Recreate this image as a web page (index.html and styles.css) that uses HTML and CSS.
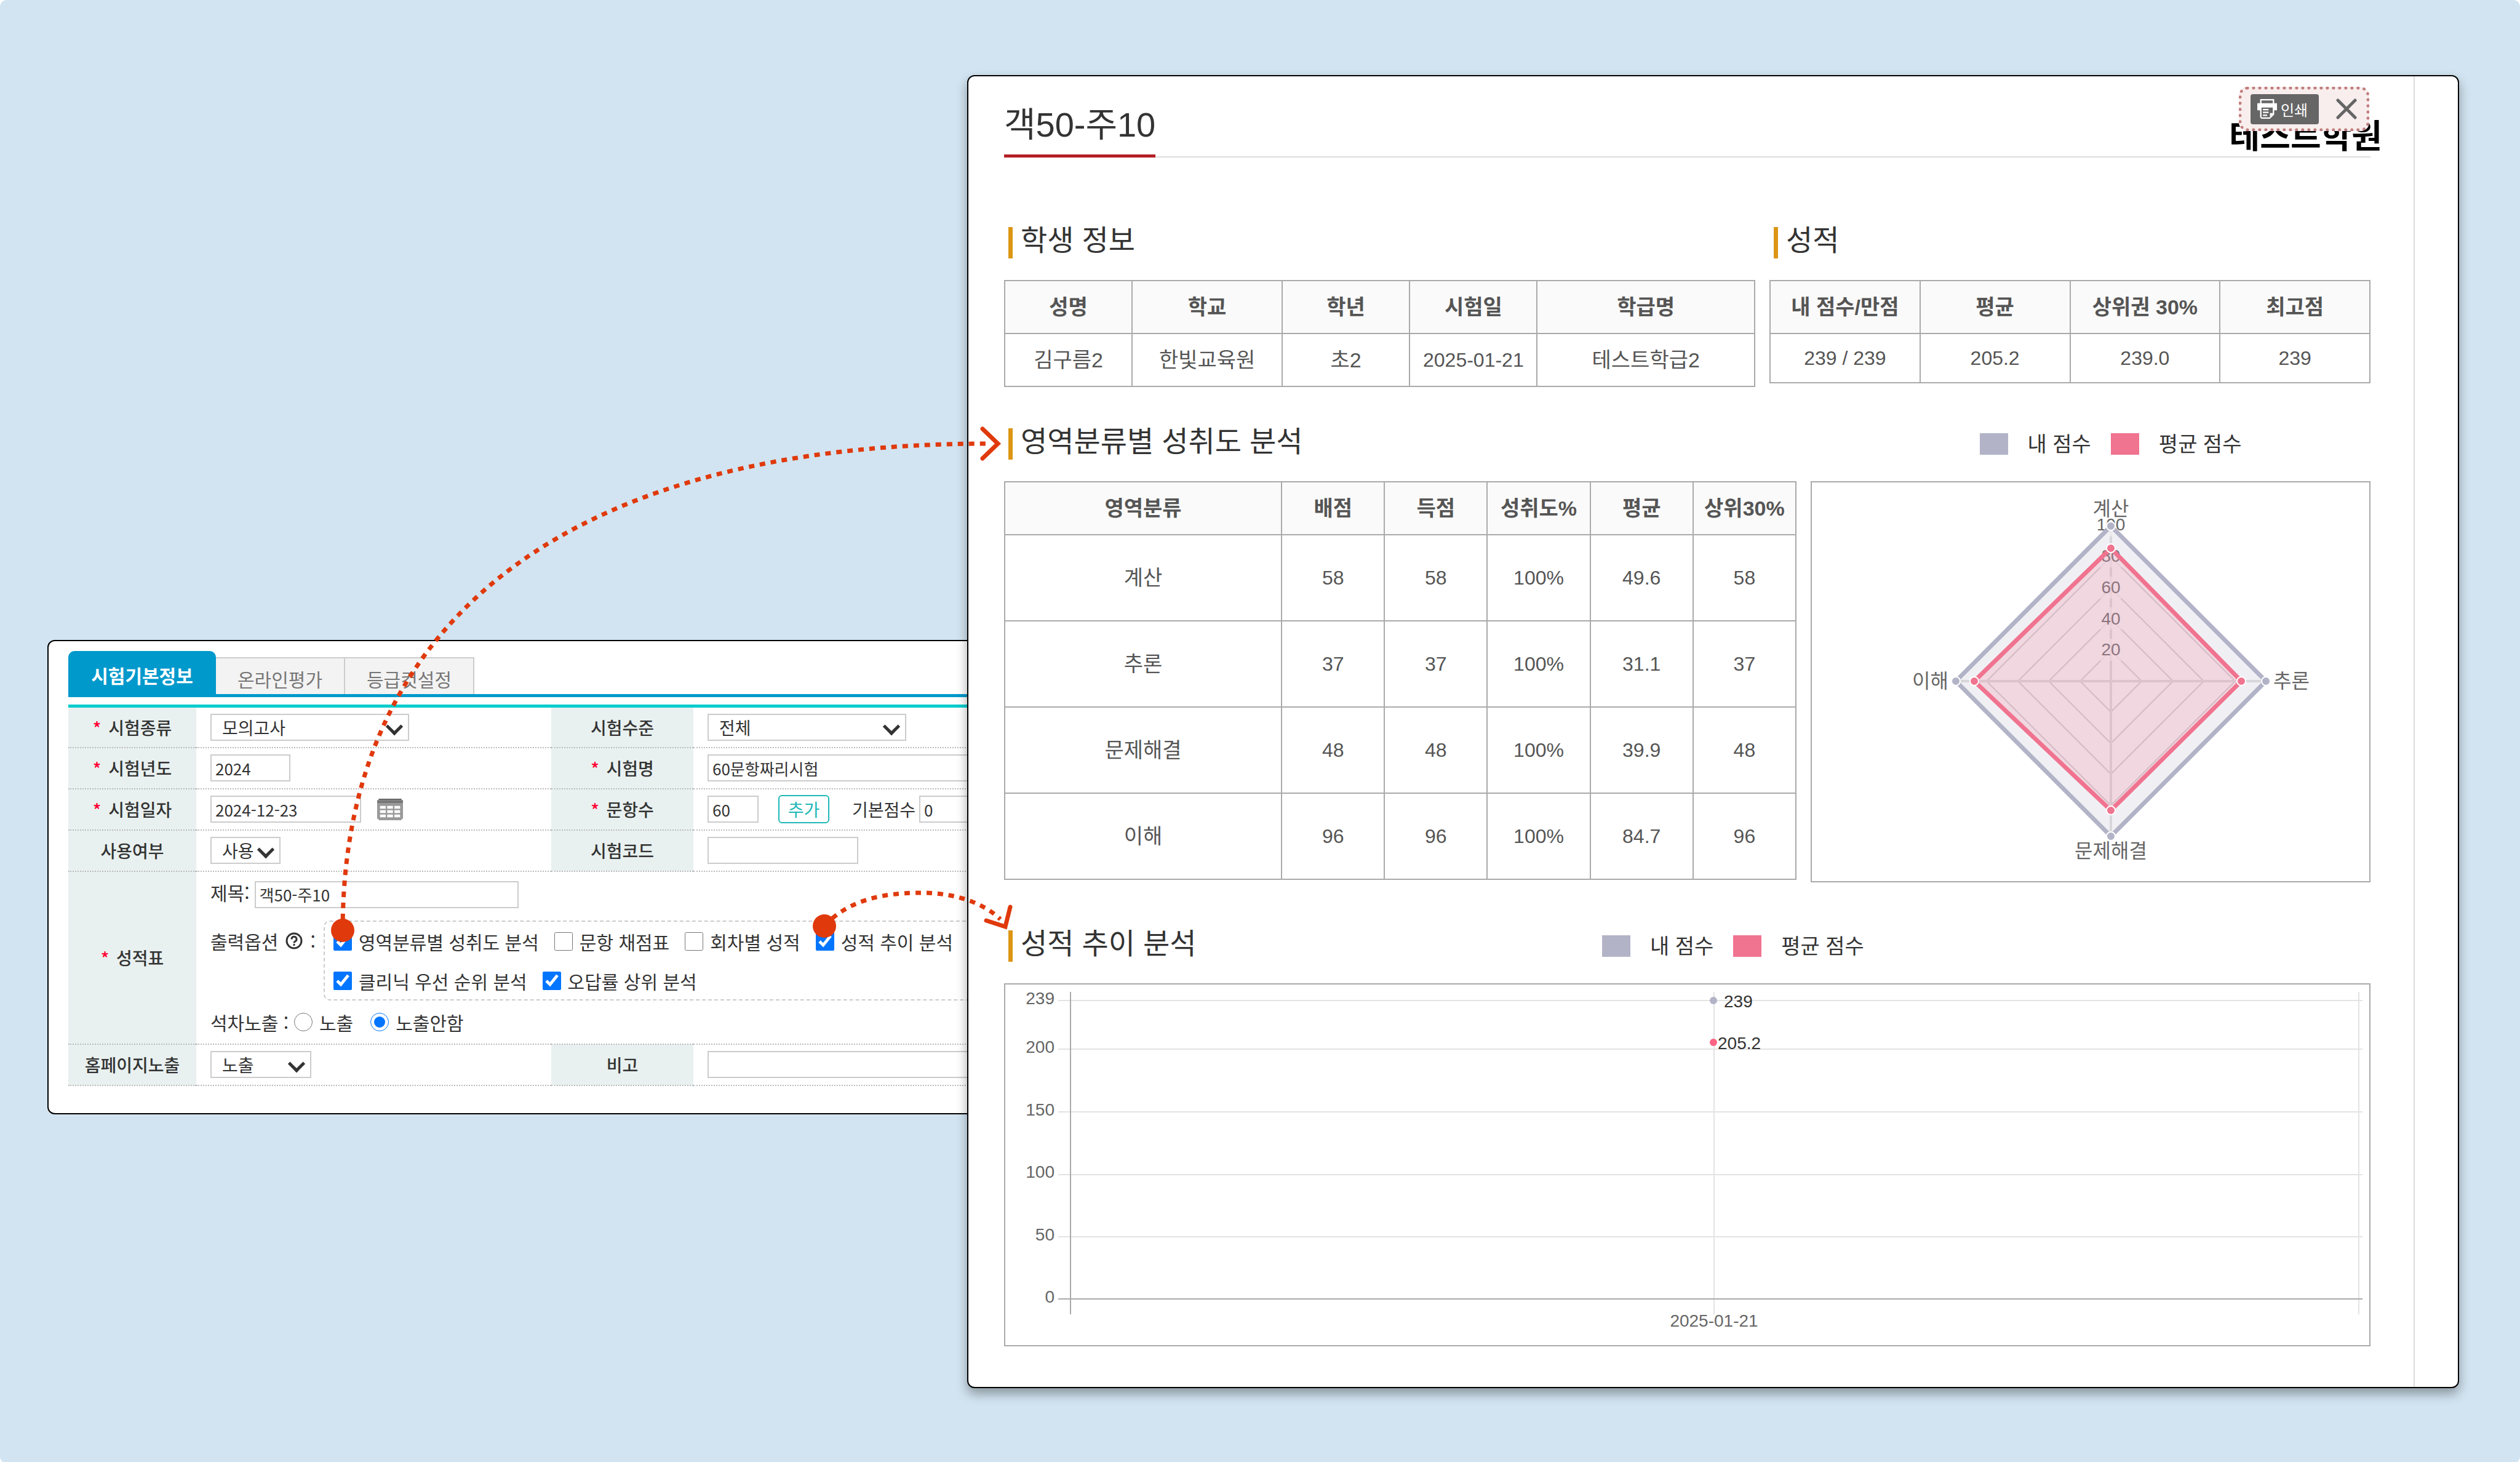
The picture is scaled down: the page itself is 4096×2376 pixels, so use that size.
FILE: index.html
```html
<!DOCTYPE html>
<html lang="ko">
<head>
  <meta charset="UTF-8" />
  <title>성적표 출력옵션</title>
  <meta name="viewport" content="width=device-width, initial-scale=1.0">
  <link rel="stylesheet" href="styles.css">
</head>
<body>

<div class="board">

  <!-- exam settings -->
  <section class="panel settings">
    <nav class="tabs">
      <a href="#basic" class="tab active">시험기본정보</a>
      <a href="#online" class="tab">온라인평가</a>
      <a href="#grade" class="tab">등급컷설정</a>
    </nav>

    <form>
      <table class="form-table">
        <colgroup>
          <col class="c-label"><col class="c-value"><col class="c-label2"><col class="c-value2">
        </colgroup>
        <tr>
          <th><label for="kind"><i>*</i> 시험종류</label></th>
          <td><span class="select w-lg"><select id="kind"><option>모의고사</option></select></span></td>
          <th><label for="level">시험수준</label></th>
          <td><span class="select w-lg"><select id="level"><option>전체</option></select></span></td>
        </tr>
        <tr>
          <th><label for="year"><i>*</i> 시험년도</label></th>
          <td><input type="text" class="w-sm" id="year" value="2024"></td>
          <th><label for="name"><i>*</i> 시험명</label></th>
          <td><input type="text" class="w-full" id="name" value="60문항짜리시험"></td>
        </tr>
        <tr>
          <th><label for="date"><i>*</i> 시험일자</label></th>
          <td>
            <div class="line">
              <input type="text" class="w-md" id="date" value="2024-12-23">
              <svg class="calendar" viewBox="0 0 18 15">
                <path fill="#999" d="M0 2h18v12h-1v1H1v-1H0z"/>
                <path fill="#666" d="M1 0h16v1H1z"/>
                <path fill="#777" d="M0 1h18v2H0z"/>
                <path fill="#fff" d="M2 5h4v2H2zM7 5h4v2H7zM12 5h4v2h-4zM2 8h4v2H2zM7 8h4v2H7zM12 8h4v2h-4zM2 11h4v2H2zM7 11h4v2H7zM12 11h4v2h-4z"/>
              </svg>
            </div>
          </td>
          <th><label for="count"><i>*</i> 문항수</label></th>
          <td>
            <div class="line">
              <input type="text" class="w-xs" id="count" value="60">
              <button type="button" class="add">추가</button>
              <label for="base" class="base-label">기본점수</label>
              <input type="text" class="w-xs" id="base" value="0">
            </div>
          </td>
        </tr>
        <tr>
          <th><label for="use">사용여부</label></th>
          <td><span class="select w-use"><select id="use"><option>사용</option></select></span></td>
          <th><label for="code">시험코드</label></th>
          <td><input type="text" class="w-md" id="code"></td>
        </tr>
        <tr class="report-row">
          <th><i>*</i> 성적표</th>
          <td colspan="3">
            <div class="line title-line">
              <label for="title">제목:</label>
              <input type="text" class="w-title" id="title" value="객50-주10">
            </div>
            <div class="option-line">
              <span class="option-label">출력옵션
                <svg class="help" viewBox="0 0 28 28">
                  <circle cx="14" cy="14" r="12" fill="none" stroke="#333" stroke-width="3"/>
                  <path d="M10 11.500a4 4 0 1 1 5.500 3.500q-1.500.800-1.500 2.500" fill="none" stroke="#333" stroke-width="3"/>
                  <circle cx="14" cy="20.500" r="1.700" fill="#333"/>
                </svg> :</span>
              <div class="options">
                <div class="option-row">
                  <label><input type="checkbox" checked>영역분류별 성취도 분석</label>
                  <label><input type="checkbox">문항 채점표</label>
                  <label><input type="checkbox">회차별 성적</label>
                  <label><input type="checkbox" checked>성적 추이 분석</label>
                </div>
                <div class="option-row">
                  <label><input type="checkbox" checked>클리닉 우선 순위 분석</label>
                  <label><input type="checkbox" checked>오답률 상위 분석</label>
                </div>
              </div>
            </div>
            <div class="rank-line">
              <span>석차노출 :</span>
              <label><input type="radio" name="rank">노출</label>
              <label><input type="radio" name="rank" checked>노출안함</label>
            </div>
          </td>
        </tr>
        <tr>
          <th><label for="home">홈페이지노출</label></th>
          <td><span class="select w-home"><select id="home"><option>노출</option></select></span></td>
          <th><label for="memo">비고</label></th>
          <td><input type="text" class="w-full" id="memo"></td>
        </tr>
      </table>
    </form>
  </section>

  <!-- printed report -->
  <section class="panel report">
    <div class="sheet">
      <header class="sheet-head">
        <h1>객50-주10</h1>
        <strong class="academy">테스트학원</strong>
        <div class="toolbar">
          <button type="button" class="print">
            <svg viewBox="0 0 14 14">
              <path fill="#fff" d="M2 0h10v3h2v5h-2v3l-3 3H3l-1-1V8H0V3h2z"/>
              <path fill="#666" d="M3 1h8v2H3zM3 6h8v4l-2 3H3z"/>
              <path fill="#fff" d="M4 7h4v1H4zM4 9h4v1H4zM4 11h3v1H4zM9 10h2l-2 3z"/>
            </svg>
            인쇄
          </button>
          <button type="button" class="close" aria-label="닫기">
            <svg viewBox="0 0 34 34"><path d="M3 3l28 28M31 3L3 31" stroke="#666" stroke-width="5" stroke-linecap="round"/></svg>
          </button>
        </div>
      </header>

      <div class="row info-row">
        <div>
          <h2>학생 정보</h2>
          <table class="data student">
            <colgroup><col class="s1"><col class="s2"><col class="s3"><col class="s4"><col class="s5"></colgroup>
            <tr><th>성명</th><th>학교</th><th>학년</th><th>시험일</th><th>학급명</th></tr>
            <tr><td>김구름2</td><td>한빛교육원</td><td>초2</td><td class="num">2025-01-21</td><td>테스트학급2</td></tr>
          </table>
        </div>
        <div>
          <h2>성적</h2>
          <table class="data score">
            <tr><th>내 점수/만점</th><th>평균</th><th>상위권 30%</th><th>최고점</th></tr>
            <tr><td class="num">239 / 239</td><td class="num">205.2</td><td class="num">239.0</td><td class="num">239</td></tr>
          </table>
        </div>
      </div>

      <div class="row area-row">
        <div>
          <h2>영역분류별 성취도 분석</h2>
          <table class="data area">
            <colgroup><col class="a1"><col><col><col><col><col></colgroup>
            <tr><th>영역분류</th><th>배점</th><th>득점</th><th>성취도%</th><th>평균</th><th>상위30%</th></tr>
            <tr><td>계산</td><td class="num">58</td><td class="num">58</td><td class="num">100%</td><td class="num">49.6</td><td class="num">58</td></tr>
            <tr><td>추론</td><td class="num">37</td><td class="num">37</td><td class="num">100%</td><td class="num">31.1</td><td class="num">37</td></tr>
            <tr><td>문제해결</td><td class="num">48</td><td class="num">48</td><td class="num">100%</td><td class="num">39.9</td><td class="num">48</td></tr>
            <tr><td>이해</td><td class="num">96</td><td class="num">96</td><td class="num">100%</td><td class="num">84.7</td><td class="num">96</td></tr>
          </table>
        </div>
        <div>
          <div class="legend radar-legend">
            <span class="swatch mine"></span><span>내 점수</span>
            <span class="swatch avg"></span><span>평균 점수</span>
          </div>
          <div class="chart">
            <svg viewBox="0 0 906 648">
              <!-- grid rings, 20 points = 50.4 -->
              <g fill="none" stroke="#d4d4d4" stroke-width="2">
                <path d="M486 273l50 50-50 50-50-50z"/>
                <path d="M486 222l101 101-101 101-101-101z"/>
                <path d="M486 172l151 151-151 151-151-151z"/>
                <path d="M486 121l202 202-202 202-202-202z"/>
                <path d="M486 71l252 252-252 252-252-252z"/>
                <path d="M486 71v504M234 323h504" stroke="#e0e0e0" stroke-width="4"/>
              </g>
              <g fill="#fff" fill-opacity=".75">
                <path d="M457 52h58v36h-58zM467 102h38v36h-38zM467 153h38v36h-38zM467 203h38v36h-38zM467 254h38v36h-38z"/>
              </g>
              <g class="tick" text-anchor="middle">
                <text x="486" y="78">100</text>
                <text x="486" y="129">80</text>
                <text x="486" y="180">60</text>
                <text x="486" y="231">40</text>
                <text x="486" y="281">20</text>
              </g>
              <path d="M486 71l252 252-252 252-252-252z" fill="#b2b3c7" fill-opacity=".2" stroke="#b2b3c7" stroke-width="7"/>
              <path d="M486 107l212 216-212 210-222-210z" fill="#f0738f" fill-opacity=".2" stroke="#f0738f" stroke-width="7"/>
              <g fill="#b2b3c7" stroke="#fff" stroke-width="2">
                <circle cx="486" cy="71" r="7"/><circle cx="738" cy="323" r="7"/><circle cx="486" cy="575" r="7"/><circle cx="234" cy="323" r="7"/>
              </g>
              <g fill="#f0738f" stroke="#fff" stroke-width="2">
                <circle cx="486" cy="107" r="7"/><circle cx="698" cy="323" r="7"/><circle cx="486" cy="533" r="7"/><circle cx="264" cy="323" r="7"/>
              </g>
              <g class="axis-name">
                <text x="486" y="54" text-anchor="middle">계산</text>
                <text x="750" y="334">추론</text>
                <text x="486" y="610" text-anchor="middle">문제해결</text>
                <text x="222" y="334" text-anchor="end">이해</text>
              </g>
            </svg>
          </div>
        </div>
      </div>

      <div class="trend-head">
        <h2>성적 추이 분석</h2>
        <div class="legend">
          <span class="swatch mine"></span><span>내 점수</span>
          <span class="swatch avg"></span><span>평균 점수</span>
        </div>
      </div>
      <div class="chart">
        <svg viewBox="0 0 2217 586">
          <path d="M86 26h2120M86 105h2120M86 207h2120M86 309h2120M86 410h2120M1152 12v524M2200 12v524" stroke="#e3e3e3" stroke-width="2"/>
          <path d="M86 511h2120M106 12v524" stroke="#aaa" stroke-width="2"/>
          <g class="tick" text-anchor="end">
            <text x="80" y="32">239</text>
            <text x="80" y="111">200</text>
            <text x="80" y="213">150</text>
            <text x="80" y="314">100</text>
            <text x="80" y="416">50</text>
            <text x="80" y="517">0</text>
          </g>
          <text class="tick" x="1152" y="556" text-anchor="middle">2025-01-21</text>
          <circle cx="1151" cy="26" r="6" fill="#b2b3c7"/>
          <circle cx="1151" cy="94" r="6" fill="#ff6384"/>
          <text class="point" x="1168" y="37">239</text>
          <text class="point" x="1158" y="105">205.2</text>
        </svg>
      </div>
    </div>
  </section>

  <!-- arrows from the options to the report sections -->
  <svg class="arrows" viewBox="0 0 4096 2376">
    <g fill="none" stroke="#e0390c" stroke-width="7">
      <path d="M557 1512C557 992 946 721 1606 721" stroke-dasharray="9 9"/>
      <path d="M1340 1505C1385 1455 1455 1451 1498 1451C1560 1451 1604 1472 1626 1494" stroke-dasharray="9 9"/>
      <path d="M1597 697l25 24-25 24M1642 1474l-8 32-31-10" stroke-linecap="round"/>
    </g>
    <circle cx="557" cy="1512" r="19" fill="#e0390c"/>
    <circle cx="1340" cy="1505" r="19" fill="#e0390c"/>
  </svg>

</div>

</body>
</html>
```
FILE: styles.css
```css
* { box-sizing: border-box; }

html { background: #fff; }
body {
  margin: 0;
  font-family: "Noto Sans CJK KR", sans-serif;
  font-size: 30px;
  line-height: 44px;
  color: #333;
}
button, input, select { font-family: inherit; color: inherit; margin: 0; }

.board {
  position: relative;
  display: grid;
  grid-template-columns: 1495fr 2425fr;
  align-items: start;
  min-height: 100vh;
  padding: 122px 99px 122px 77px;
  background: #d2e4f1;
  border-radius: 11px;
}
.panel {
  background: #fff;
  border: 2px solid #000;
  border-radius: 12px;
}
.arrows {
  position: absolute;
  top: 0;
  left: 0;
  width: 100%;
  z-index: 2;
  pointer-events: none;
}

/* settings panel, runs on under the report */
.settings {
  margin: 918px -40px 0 0;
  padding: 16px 0 44px 32px;
  overflow: hidden;
}
.tabs {
  display: flex;
  align-items: flex-end;
  border-bottom: 5px solid #0099cc;
  margin-bottom: 12px;
}
.tab {
  width: 210px;
  height: 60px;
  border: 2px solid #ccc;
  border-width: 2px 2px 0 0;
  background: #f3f3f3;
  color: #777;
  line-height: 66px;
  text-align: center;
  text-decoration: none;
}
.tab.active {
  width: 240px;
  height: 70px;
  border: 0;
  border-radius: 10px 10px 0 0;
  background: #0099cc;
  color: #fff;
  font-weight: bold;
  line-height: 78px;
}

.form-table {
  width: 100%;
  table-layout: fixed;
  border-collapse: collapse;
  border-top: 5px solid #00cccc;
}
.c-label { width: 208px; }
.c-value { width: 577px; }
.c-label2 { width: 231px; }
.form-table th, .form-table td {
  height: 67px;
  padding: 0 0 0 23px;
  border-bottom: 2px dotted #bbb;
}
.form-table th {
  padding: 0;
  background: #e9f1f0;
  font-size: 28px;
  font-weight: 500;
  text-align: center;
}
.form-table i { color: #ff0033; font-style: normal; margin-right: 4px; }
.form-table .report-row td { height: 277px; padding-top: 15px; vertical-align: top; }

input[type=text], .select select {
  display: block;
  height: 44px;
  border: 2px solid #ccc;
  border-radius: 0;
  background: #fff;
  padding: 0 6px;
  font-size: 26px;
}
.select { position: relative; display: block; }
.select select {
  appearance: none;
  width: 100%;
  padding: 0 17px;
  font-size: 28px;
}
.select::after {
  content: "";
  position: absolute;
  top: 11px;
  right: 14px;
  width: 15px;
  height: 15px;
  border: solid #333;
  border-width: 0 5px 5px 0;
  transform: rotate(45deg);
}
.w-lg { width: 323px; }
.w-md { width: 245px; }
.w-sm { width: 130px; }
.w-xs { width: 83px; }
.w-use { width: 114px; }
.w-home { width: 164px; }
.w-title { width: 429px; }
.w-full { width: 100%; }

.line { display: flex; align-items: center; }
.line > * { flex: none; }
.calendar { width: 42px; height: 35px; margin-left: 26px; }
.add {
  width: 83px;
  height: 46px;
  margin: 0 37px 0 32px;
  padding: 0;
  border: 2px solid #20b8b8;
  border-radius: 6px;
  background: #fff;
  color: #20b8b8;
  font-size: 28px;
  line-height: 40px;
}
.base-label { margin-right: 6px; font-size: 28px; white-space: nowrap; }

.title-line { align-items: flex-start; gap: 8px; }
.title-line label { line-height: 36px; }
.option-line { display: flex; margin-top: 20px; }
.option-label {
  display: flex;
  align-items: center;
  gap: 12px;
  width: 184px;
  height: 66px;
  white-space: nowrap;
}
.help { flex: none; width: 28px; height: 28px; }
.options {
  flex: 1;
  border: 2px dashed #ccc;
  border-right: 0;
  border-radius: 10px;
  padding: 0 0 0 14px;
  height: 130px;
}
.option-row { display: flex; gap: 25px; height: 64px; }
.option-row label, .rank-line label { display: flex; align-items: center; gap: 11px; }
input[type=checkbox], input[type=radio] { width: 30px; height: 30px; margin: 0; }
.rank-line { display: flex; align-items: center; height: 70px; }
.rank-line span { width: 136px; }
.rank-line label { margin-right: 28px; }

/* report panel */
.report {
  position: relative;
  z-index: 1;
  box-shadow: 0 9px 18px rgba(0, 0, 0, .35);
  font-family: "Liberation Sans", "Noto Sans CJK KR", sans-serif;
}
.sheet {
  margin-right: 70px;
  border-right: 2px solid #ddd;
  padding: 0 70px 66px 58px;
}
.sheet-head {
  position: relative;
  display: flex;
  justify-content: space-between;
  align-items: flex-end;
  height: 132px;
  border-bottom: 2px solid #ddd;
}
h1 {
  margin: 0 0 -2px;
  height: 97px;
  border-bottom: 5px solid #b41e24;
  font-size: 56px;
  font-weight: 400;
  line-height: 88px;
}
.academy {
  margin: 0 -19px -2px 0;
  color: #000;
  font-size: 54px;
  line-height: 68px;
}
.toolbar {
  position: absolute;
  top: 17px;
  right: 2px;
  display: flex;
  align-items: center;
  justify-content: space-between;
  width: 212px;
  height: 72px;
  padding: 0 15px 0 14px;
  border: 5px dotted #c17d7d;
  border-radius: 14px;
  background: #f8eeee;
}
.print {
  display: flex;
  align-items: center;
  gap: 6px;
  width: 111px;
  height: 49px;
  padding: 0 0 0 11px;
  border: 0;
  border-radius: 4px;
  background: #666;
  color: #fff;
  font-size: 24px;
  white-space: nowrap;
}
.print svg { width: 32px; height: 32px; }
.close { border: 0; background: none; padding: 0; height: 34px; }
.close svg { display: block; width: 34px; height: 34px; }

h2 {
  margin: 0 0 35px 7px;
  height: 51px;
  border-left: 7px solid #dc9614;
  padding-left: 13px;
  font-size: 47px;
  font-weight: 400;
  line-height: 43px;
}
.row { display: grid; gap: 23px; align-items: start; }
.info-row { grid-template-columns: 1221fr 977fr; margin-top: 113px; }
.area-row { grid-template-columns: 1288fr 910fr; margin-top: 67px; }

.data {
  width: 100%;
  table-layout: fixed;
  border-collapse: collapse;
  color: #555;
  font-size: 34px;
}
.data th, .data td {
  height: 86px;
  padding: 0;
  border: 2px solid #aaa;
  text-align: center;
}
.data th { background: #fafafa; font-weight: bold; white-space: nowrap; }
.data .num { font-size: 32px; }
.score td { height: 80px; }
.area td { height: 140px; }
.s1, .s3, .s4 { width: 17%; }
.s2 { width: 20%; }
.s5 { width: 29%; }
.a1 { width: 35%; }

.legend {
  display: flex;
  align-items: center;
  gap: 32px;
  height: 51px;
  color: #333;
  font-size: 34px;
}
.radar-legend { justify-content: center; padding-left: 65px; margin-bottom: 35px; }
.swatch { width: 46px; height: 35px; }
.mine { background: #b2b3c7; }
.avg { background: #f0738f; }

.chart { border: 2px solid #aaa; }
.chart svg { display: block; width: 100%; }
.axis-name { fill: #666; font-size: 32px; }
.tick { fill: #666; font-size: 28px; }
.point { fill: #333; font-size: 28px; }

.trend-head {
  display: grid;
  grid-template-columns: 972fr 1249fr;
  margin-top: 78px;
}
```
